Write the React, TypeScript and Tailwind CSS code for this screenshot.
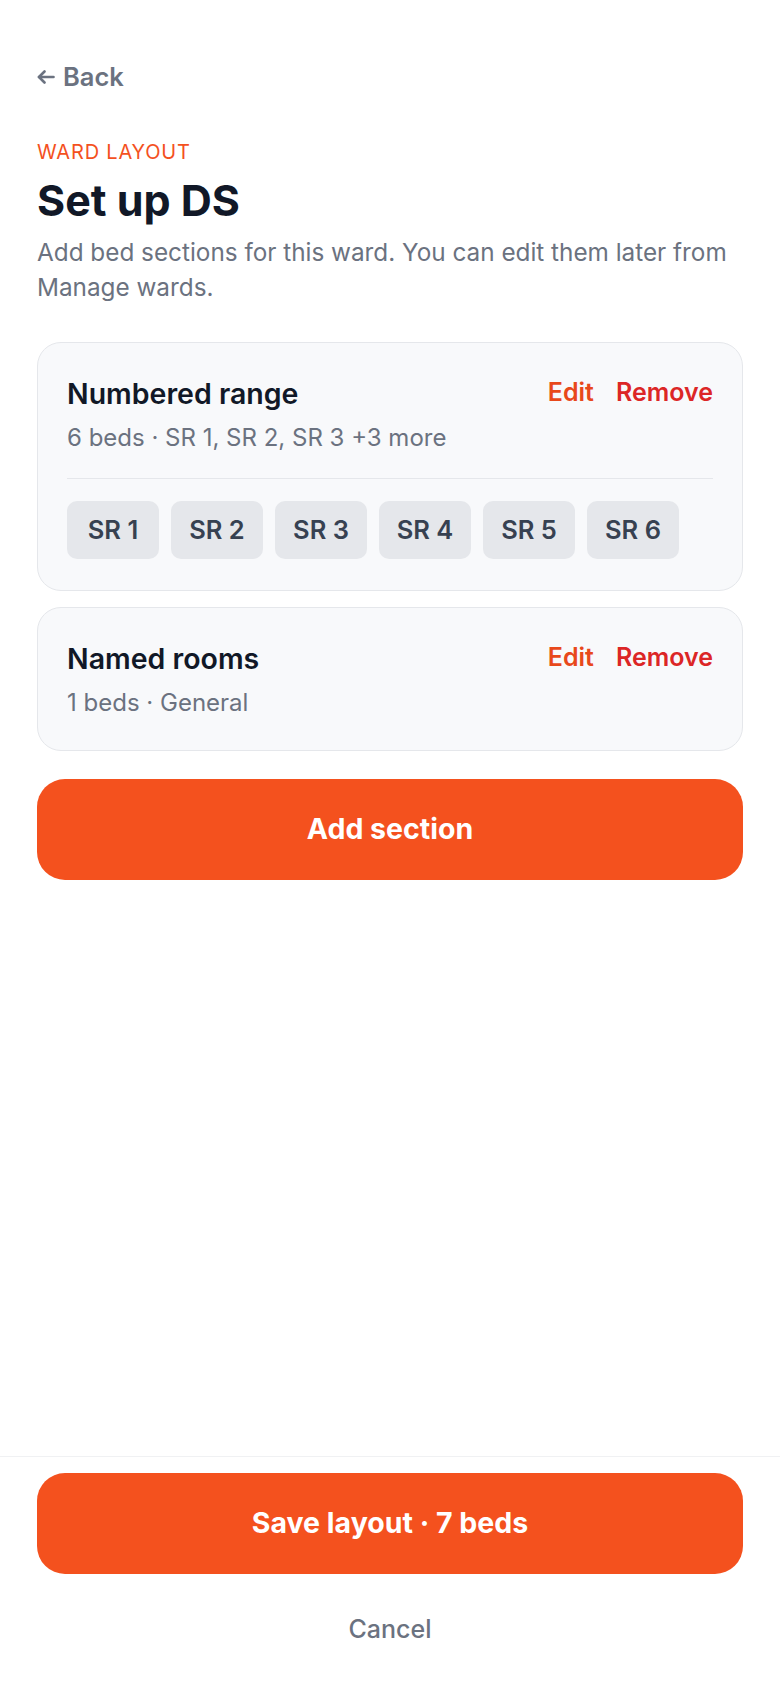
import React from "react";

interface Section {
    title: string;
    summary: string;
    beds: string[];
}

const sections: Section[] = [
    {
        title: "Numbered range",
        summary: "6 beds · SR 1, SR 2, SR 3 +3 more",
        beds: ["SR 1", "SR 2", "SR 3", "SR 4", "SR 5", "SR 6"],
    },
    {
        title: "Named rooms",
        summary: "1 beds · General",
        beds: [],
    },
];

const SectionCard: React.FC<{ section: Section }> = ({ section }) => {
    return (
        <div className="rounded-3xl border border-[#e5e7eb] bg-[#f8f9fb] px-[29px] pt-[33px] pb-[31px]">
            <div className="flex items-start justify-between">
                <h2 className="text-[28.5px] leading-[36px] font-semibold text-[#111827]">{section.title}</h2>
                <div className="flex items-center gap-[22px] text-[25px] leading-[32px] font-semibold">
                    <button className="text-[#e8481b]">Edit</button>
                    <button className="text-[#dc2626]">Remove</button>
                </div>
            </div>
            <p className="mt-[10px] text-[24px] leading-[32px] text-[#6b7280]">{section.summary}</p>

            {section.beds.length > 0 && (
                <>
                    <div className="mt-[24px] h-px bg-[#e5e7eb]" />
                    <div className="mt-[22px] flex flex-wrap gap-3">
                        {section.beds.map((bed) => (
                            <span
                                key={bed}
                                className="flex h-[58px] w-[92px] items-center justify-center rounded-[10px] bg-[#e5e7eb] text-[25.5px] leading-[32px] font-semibold text-[#374151]"
                            >
                                {bed}
                            </span>
                        ))}
                    </div>
                </>
            )}
        </div>
    );
};

export default function App() {
    return (
        <div className="flex min-h-screen flex-col bg-white font-['Inter',sans-serif]">
            {/* Page content */}
            <main className="flex-1 px-[37px] pt-[61px]">
                <button className="flex items-center gap-[8px] text-[25.5px] leading-[32px] font-semibold text-[#6b7280]">
                    <svg width="18" height="14" viewBox="0 0 18 14" fill="none" stroke="currentColor" strokeWidth="2.6" strokeLinecap="round" strokeLinejoin="round">
                        <path d="M16.5 7H2" />
                        <path d="M7.5 1.5L2 7l5.5 5.5" />
                    </svg>
                    <span>Back</span>
                </button>

                <p className="mt-[45px] text-[20px] leading-[28px] tracking-[0.04em] text-[#f4511e]">WARD LAYOUT</p>
                <h1 className="mt-[9px] text-[43px] leading-[50px] font-bold text-[#111827]">Set up DS</h1>
                <p className="mt-[10px] text-[24.3px] leading-[35px] text-[#6b7280]">
                    Add bed sections for this ward. You can edit them later from Manage wards.
                </p>

                <div className="mt-[37px] flex flex-col gap-[16px]">
                    {sections.map((s) => (
                        <SectionCard key={s.title} section={s} />
                    ))}
                </div>

                <button className="mt-[28px] flex h-[101px] w-full items-center justify-center rounded-[28px] bg-[#f4511e] text-[28.5px] font-bold text-white">
                    Add section
                </button>
            </main>

            {/* Footer actions */}
            <footer className="border-t border-[#f0f1f3] px-[37px] pt-[16px] pb-[20px]">
                <button className="flex h-[101px] w-full items-center justify-center rounded-[28px] bg-[#f4511e] text-[28.5px] font-bold text-white">
                    Save layout · 7 beds
                </button>
                <button className="mt-[16px] flex h-[78px] w-full items-center justify-center text-[25px] leading-[32px] font-medium text-[#6b7280]">
                    Cancel
                </button>
            </footer>
        </div>
    );
}
